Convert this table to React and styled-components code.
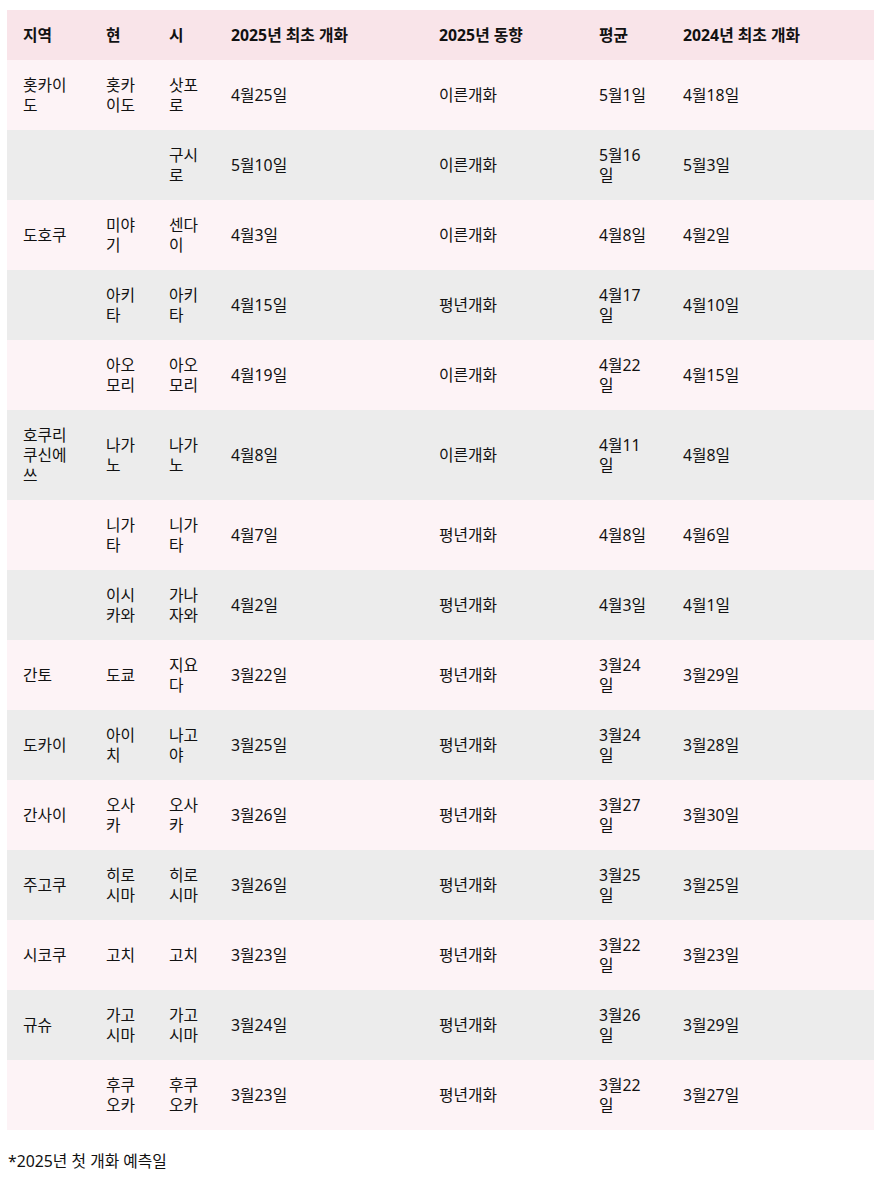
import React from 'react';
import styled, { createGlobalStyle } from 'styled-components';

const GlobalStyle = createGlobalStyle`
	body {
		margin: 0;
		background: #fff;
		font-family: "Noto Sans", "Noto Sans CJK KR", sans-serif;
		color: #111;
	}
`;

const Page = styled.div`
	padding: 10px 0 0 7px;
`;

const Table = styled.table`
	width: 867px;
	border-collapse: collapse;
	table-layout: fixed;
	font-size: 15.8px;
	line-height: 20px;
`;

const HeadCell = styled.th`
	width: ${(p) => p.w}px;
	padding: 15px 14px 15px 16px;
	text-align: left;
	font-weight: 700;
	background: #f9e4e9;
`;

const Row = styled.tr`
	background: ${(p) => (p.shade ? '#ececec' : '#fdf3f6')};
`;

const Cell = styled.td`
	padding: 15px 14px 15px 16px;
	vertical-align: middle;
	word-break: break-all;
`;

const Note = styled.p`
	margin: 21px 0 0 1px;
	font-size: 15.8px;
	line-height: 20px;
`;

const columns = [
	['지역', 53],
	['현', 33],
	['시', 32],
	['2025년 최초 개화', 178],
	['2025년 동향', 130],
	['평균', 54],
	['2024년 최초 개화', 177],
];

const rows = [
	['홋카이도', '홋카이도', '삿포로', '4월25일', '이른개화', '5월1일', '4월18일'],
	['', '', '구시로', '5월10일', '이른개화', '5월16일', '5월3일'],
	['도호쿠', '미야기', '센다이', '4월3일', '이른개화', '4월8일', '4월2일'],
	['', '아키타', '아키타', '4월15일', '평년개화', '4월17일', '4월10일'],
	['', '아오모리', '아오모리', '4월19일', '이른개화', '4월22일', '4월15일'],
	['호쿠리쿠신에쓰', '나가노', '나가노', '4월8일', '이른개화', '4월11일', '4월8일'],
	['', '니가타', '니가타', '4월7일', '평년개화', '4월8일', '4월6일'],
	['', '이시카와', '가나자와', '4월2일', '평년개화', '4월3일', '4월1일'],
	['간토', '도쿄', '지요다', '3월22일', '평년개화', '3월24일', '3월29일'],
	['도카이', '아이치', '나고야', '3월25일', '평년개화', '3월24일', '3월28일'],
	['간사이', '오사카', '오사카', '3월26일', '평년개화', '3월27일', '3월30일'],
	['주고쿠', '히로시마', '히로시마', '3월26일', '평년개화', '3월25일', '3월25일'],
	['시코쿠', '고치', '고치', '3월23일', '평년개화', '3월22일', '3월23일'],
	['규슈', '가고시마', '가고시마', '3월24일', '평년개화', '3월26일', '3월29일'],
	['', '후쿠오카', '후쿠오카', '3월23일', '평년개화', '3월22일', '3월27일'],
];

const App = () => {
	return (
		<Page>
			<GlobalStyle />
			<Table>
				<thead>
					<tr>
						{columns.map(([label, w]) => (
							<HeadCell key={label} w={w}>{label}</HeadCell>
						))}
					</tr>
				</thead>
				<tbody>
					{rows.map((row, i) => (
						<Row key={i} shade={i % 2 === 1}>
							{row.map((value, j) => (
								<Cell key={j}>{value}</Cell>
							))}
						</Row>
					))}
				</tbody>
			</Table>
			<Note>*2025년 첫 개화 예측일</Note>
		</Page>
	);
};

export default App;
